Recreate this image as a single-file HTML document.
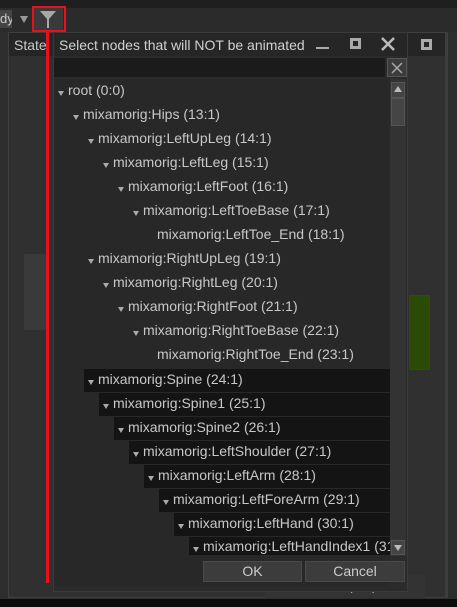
<!DOCTYPE html>
<html><head><style>
*{margin:0;padding:0;box-sizing:border-box}
body{width:457px;height:607px;overflow:hidden;background:#2e2e2e;font-family:"Liberation Sans",sans-serif;font-size:14px;color:#c8c8c8;position:relative}
.a{position:absolute}
.row{position:absolute;height:24px;line-height:24px;white-space:nowrap;overflow:hidden}
.tri{display:inline-block;width:0;height:0;border-left:3px solid transparent;border-right:3px solid transparent;border-top:5px solid #aaa;margin-right:4px;vertical-align:-1px}
.hl{background:#141414}
</style></head><body>
<div class="a" style="left:0;top:0;width:457px;height:8px;background:#1f1f1f"></div>
<div class="a" style="left:0;top:8px;width:457px;height:24px;background:#2b2b2b"></div>
<div class="a" style="left:0;top:10px;width:12px;height:18px;background:#444;color:#ccc;line-height:18px;font-size:13px;overflow:hidden">dy</div>
<div class="a" style="left:20px;top:16px;border-left:4px solid transparent;border-right:4px solid transparent;border-top:7px solid #999"></div>
<div class="a" style="left:34px;top:8px;width:29px;height:22px;background:#3a3a3a"></div>
<svg class="a" style="left:38px;top:9px" width="20" height="20"><path d="M2 2H18L11 10V19H9V10Z" fill="#a8a8a8"/></svg>
<div class="a" style="left:32px;top:6px;width:34px;height:26px;border:2px solid #e8101a"></div>
<div class="a" style="left:8px;top:32px;width:440px;height:566px;border:1px solid #3f3f3f;background:#303030"></div>
<div class="a" style="left:9px;top:33px;width:50px;height:23px;background:#252525"></div>
<div class="a" style="left:14px;top:36px;line-height:18px;font-size:14px">State</div>
<div class="a" style="left:24px;top:254px;width:22px;height:76px;background:#3a3a3a"></div>
<div class="a" style="left:408px;top:33px;width:37px;height:23px;background:#252525"></div>
<div class="a" style="left:421px;top:39px;width:11px;height:11px;border:3px solid #aaa"></div>
<div class="a" style="left:409px;top:295px;width:21px;height:75px;background:#2b4a05;border:1px solid #3d3d3d"></div>
<div class="a" style="left:445px;top:32px;width:2px;height:566px;background:#3d3d3d"></div>
<div class="a" style="left:265px;top:575px;width:160px;height:23px;background:#333"></div>
<div class="a" style="left:313px;top:577px;color:#bbb">Land (3:1)</div>
<div class="a" style="left:0;top:599px;width:457px;height:8px;background:#0c0c0c"></div>
<div class="a" style="left:53px;top:32px;width:355px;height:560px;background:#2b2b2b;border:1px solid #3a3a3a"></div>
<div class="a" style="left:54px;top:33px;width:353px;height:23px;background:#262626"></div>
<div class="a" style="left:59px;top:36px;font-size:14px;line-height:18px;color:#d0d0d0">Select nodes that will NOT be animated</div>
<div class="a" style="left:316px;top:47px;width:13px;height:2px;background:#aaa"></div>
<div class="a" style="left:350px;top:38px;width:11px;height:11px;border:3px solid #aaa"></div>
<svg class="a" style="left:380px;top:36px" width="16" height="16"><path d="M2 2L14 14M14 2L2 14" stroke="#bbb" stroke-width="2.5"/></svg>
<div class="a" style="left:54px;top:58px;width:331px;height:19px;background:#1b1b1b"></div>
<div class="a" style="left:387px;top:58px;width:20px;height:19px;background:#3c3c3c;border:1px solid #555"></div>
<svg class="a" style="left:390px;top:61px" width="14" height="14"><path d="M2 2L12 12M12 2L2 12" stroke="#aaa" stroke-width="1.5"/></svg>
<div class="a" style="left:54px;top:79px;width:336px;height:507px;background:#282828"></div>
<div class="row" style="left:58px;top:78px"><span class="tri"></span>root (0:0)</div>
<div class="row" style="left:73px;top:102px"><span class="tri"></span>mixamorig:Hips (13:1)</div>
<div class="row" style="left:88px;top:126px"><span class="tri"></span>mixamorig:LeftUpLeg (14:1)</div>
<div class="row" style="left:103px;top:150px"><span class="tri"></span>mixamorig:LeftLeg (15:1)</div>
<div class="row" style="left:118px;top:174px"><span class="tri"></span>mixamorig:LeftFoot (16:1)</div>
<div class="row" style="left:133px;top:198px"><span class="tri"></span>mixamorig:LeftToeBase (17:1)</div>
<div class="row" style="left:157px;top:222px">mixamorig:LeftToe_End (18:1)</div>
<div class="row" style="left:88px;top:246px"><span class="tri"></span>mixamorig:RightUpLeg (19:1)</div>
<div class="row" style="left:103px;top:270px"><span class="tri"></span>mixamorig:RightLeg (20:1)</div>
<div class="row" style="left:118px;top:294px"><span class="tri"></span>mixamorig:RightFoot (21:1)</div>
<div class="row" style="left:133px;top:318px"><span class="tri"></span>mixamorig:RightToeBase (22:1)</div>
<div class="row" style="left:157px;top:342px">mixamorig:RightToe_End (23:1)</div>
<div class="row hl" style="left:84px;top:369px;width:306px;height:23px;line-height:21px;padding-left:4px"><span class="tri"></span>mixamorig:Spine (24:1)</div>
<div class="row hl" style="left:99px;top:393px;width:291px;height:23px;line-height:21px;padding-left:4px"><span class="tri"></span>mixamorig:Spine1 (25:1)</div>
<div class="row hl" style="left:114px;top:417px;width:276px;height:23px;line-height:21px;padding-left:4px"><span class="tri"></span>mixamorig:Spine2 (26:1)</div>
<div class="row hl" style="left:129px;top:441px;width:261px;height:23px;line-height:21px;padding-left:4px"><span class="tri"></span>mixamorig:LeftShoulder (27:1)</div>
<div class="row hl" style="left:144px;top:465px;width:246px;height:23px;line-height:21px;padding-left:4px"><span class="tri"></span>mixamorig:LeftArm (28:1)</div>
<div class="row hl" style="left:159px;top:489px;width:231px;height:23px;line-height:21px;padding-left:4px"><span class="tri"></span>mixamorig:LeftForeArm (29:1)</div>
<div class="row hl" style="left:174px;top:513px;width:216px;height:23px;line-height:21px;padding-left:4px"><span class="tri"></span>mixamorig:LeftHand (30:1)</div>
<div class="row hl" style="left:189px;top:537px;width:201px;height:18px;line-height:18px;padding-left:4px"><span class="tri"></span>mixamorig:LeftHandIndex1 (31:1)</div>
<div class="a" style="left:390px;top:79px;width:16px;height:477px;background:#333"></div>
<div class="a" style="left:391px;top:82px;width:14px;height:16px;background:#444;border:1px solid #555"></div>
<div class="a" style="left:394px;top:86px;border-left:4px solid transparent;border-right:4px solid transparent;border-bottom:6px solid #bbb"></div>
<div class="a" style="left:391px;top:98px;width:14px;height:28px;background:#454545;border:1px solid #555"></div>
<div class="a" style="left:391px;top:540px;width:14px;height:15px;background:#444;border:1px solid #555"></div>
<div class="a" style="left:394px;top:545px;border-left:4px solid transparent;border-right:4px solid transparent;border-top:6px solid #bbb"></div>
<div class="a" style="left:203px;top:561px;width:99px;height:21px;background:#3c3c3c;border:1px solid #4a4a4a;text-align:center;line-height:19px;font-size:14px;color:#ccc">OK</div>
<div class="a" style="left:305px;top:561px;width:100px;height:21px;background:#3c3c3c;border:1px solid #4a4a4a;text-align:center;line-height:19px;font-size:14px;color:#ccc">Cancel</div>
<div class="a" style="left:46px;top:32px;width:3px;height:551px;background:#e8101a"></div>
</body></html>
